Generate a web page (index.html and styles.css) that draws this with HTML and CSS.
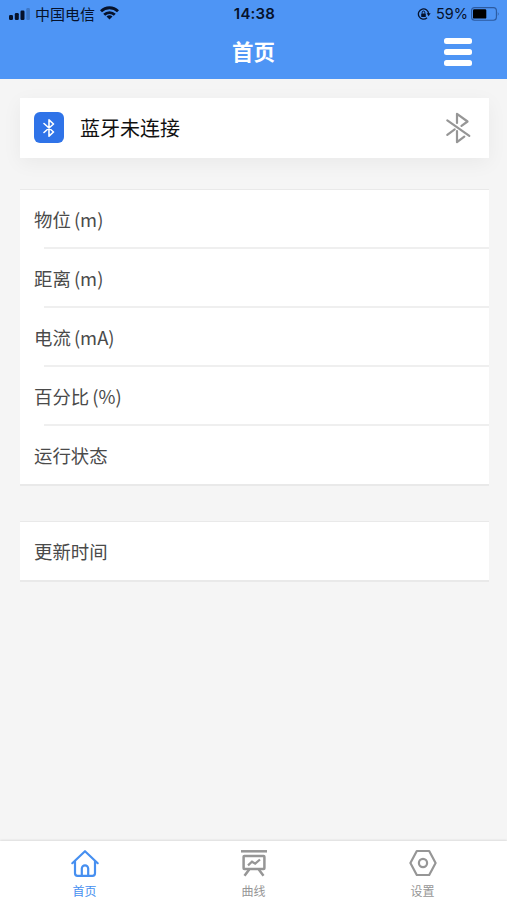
FILE: index.html
```html
<!DOCTYPE html>
<html lang="zh-CN">
<head>
    <meta charset="UTF-8">
    <meta name="viewport" content="width=device-width, initial-scale=1.0">
    <title>首页</title>
    <link rel="stylesheet" href="styles.css">
</head>
<body>
    <header class="header">
        <div class="status-bar">
            <div class="status-left">
                <svg class="signal" width="21" height="12" viewBox="0 0 21 12">
                    <rect x="0" y="7" width="4" height="5" rx="1.2"/>
                    <rect x="5.8" y="5" width="4" height="7" rx="1.2"/>
                    <rect x="11.5" y="2.5" width="4" height="9.5" rx="1.2"/>
                    <rect x="17.3" y="0" width="3.6" height="12" rx="1.2" opacity="0.22"/>
                </svg>
                <span class="carrier">中国电信</span>
                <svg class="wifi" width="19" height="14" viewBox="0 0 19 14">
                    <g fill="none" stroke="#06122b" stroke-width="2.8">
                        <path d="M1 5.2a12.2 12.2 0 0 1 17 0"/>
                        <path d="M4.2 8.7a7.6 7.6 0 0 1 10.6 0"/>
                    </g>
                    <path d="M9.5 13.6l-3-3a4.3 4.3 0 0 1 6 0z" fill="#06122b"/>
                </svg>
            </div>
            <span class="clock">14:38</span>
            <div class="status-right">
                <svg class="rotation-lock" width="14" height="12" viewBox="0 0 14 12">
                    <path d="M11.6 6A5.1 5.1 0 1 0 10 9.7" fill="none" stroke="#06122b" stroke-width="1.3"/>
                    <path d="M9.7 5.3h3.9l-2 2.9z" fill="#06122b"/>
                    <rect x="4.2" y="5.4" width="4.6" height="3.5" rx="0.5" fill="#06122b"/>
                    <path d="M5.2 5.6V4.4a1.3 1.3 0 0 1 2.6 0v1.2" fill="none" stroke="#06122b"/>
                </svg>
                <span class="percent">59%</span>
                <svg class="battery" width="29" height="14" viewBox="0 0 29 14">
                    <rect x="0.6" y="0.6" width="24.8" height="12.6" rx="3" fill="none" stroke="#2c5a9f" stroke-width="1.1"/>
                    <rect x="2" y="2.2" width="13.3" height="9.4" rx="1.2" fill="#000"/>
                    <path d="M26.8 4.8q1.8 2.1 0 4.2z" fill="#2c5a9f"/>
                </svg>
            </div>
        </div>
        <div class="nav-bar">
            <h1 class="title">首页</h1>
            <div class="menu">
                <span></span>
                <span></span>
                <span></span>
            </div>
        </div>
    </header>

    <main class="content">
        <section class="bluetooth">
            <div class="bluetooth-icon">
                <svg width="12" height="20" viewBox="0 0 12 20">
                    <path d="M1 5.5l9.5 8.5L6 18.2V1.8L10.5 6 1 14.5" fill="none" stroke="#fff" stroke-width="1.6" stroke-linejoin="round" stroke-linecap="round"/>
                </svg>
            </div>
            <span class="bluetooth-text">蓝牙未连接</span>
            <svg class="bluetooth-off" width="26" height="32" viewBox="0 0 26 32">
                <g fill="none" stroke="#969696" stroke-width="2.2" stroke-linejoin="round" stroke-linecap="round">
                    <path d="M2.3 8.3l22 15.6"/>
                    <path d="M12 11V1.8l10.5 7.7-6 4.3"/>
                    <path d="M2.3 22.8l7.4-5.4"/>
                    <path d="M12 19V30.2l7.3-5.6"/>
                </g>
            </svg>
        </section>

        <ul class="list">
            <li class="row">物位 (m)</li>
            <li class="row">距离 (m)</li>
            <li class="row">电流 (mA)</li>
            <li class="row">百分比 (%)</li>
            <li class="row">运行状态</li>
        </ul>

        <ul class="list list-time">
            <li class="row">更新时间</li>
        </ul>
    </main>

    <nav class="tab-bar">
        <a class="tab active">
            <svg width="30" height="30" viewBox="0 0 30 30" fill="none" stroke="currentColor" stroke-width="2.2" stroke-linecap="round" stroke-linejoin="round">
                <path d="M2.3 15.2L15 3.2l12.7 12"/>
                <path d="M5 13.2v12.1a2.5 2.5 0 0 0 2.5 2.5h15a2.5 2.5 0 0 0 2.5-2.5V13.2"/>
                <path d="M11.8 27.5v-7a3.2 3.2 0 0 1 6.4 0v7"/>
            </svg>
            <span>首页</span>
        </a>
        <a class="tab">
            <svg width="30" height="30" viewBox="0 0 30 30" fill="none" stroke="currentColor" stroke-width="2.5">
                <path d="M2 3.3h26"/>
                <rect x="4.6" y="8" width="20.8" height="13" rx="0.8"/>
                <path d="M9 17.4l4-3.7 3.2 2 4.8-4.2" stroke-width="2.2"/>
                <path d="M10.2 21.4l-4.7 6.4M19.8 21.4l4.7 6.4"/>
            </svg>
            <span>曲线</span>
        </a>
        <a class="tab">
            <svg width="30" height="30" viewBox="0 0 30 30" fill="none" stroke="currentColor" stroke-width="2.2" stroke-linejoin="round">
                <path d="M8.8 3h12.4L27.6 15l-6.4 12H8.8L2.4 15z"/>
                <circle cx="15" cy="15" r="4.1"/>
            </svg>
            <span>设置</span>
        </a>
    </nav>
</body>
</html>
```
FILE: styles.css
```css
* {
    box-sizing: border-box;
}

body {
    display: flex;
    flex-direction: column;
    height: 900px;
    margin: 0;
    background-color: #f5f5f5;
    color: #4a4a4a;
    font-family: "Noto Sans CJK SC", sans-serif;
    overflow: hidden;
}

/* Header */
.header {
    height: 79px;
    background-color: #4e95f5;
}

.status-bar {
    display: grid;
    grid-template-columns: 1fr auto 1fr;
    align-items: center;
    height: 27px;
    padding: 0 7px 0 9px;
    color: #06122b;
}

.status-left,
.status-right {
    display: flex;
    align-items: center;
}

.status-right {
    justify-content: flex-end;
}

.signal {
    fill: #06122b;
}

.carrier {
    margin: 0 5px 0 5px;
    font-size: 15px;
    line-height: 27px;
}

.wifi {
    margin-bottom: 1px;
}

.clock {
    font-family: Inter, sans-serif;
    font-size: 15px;
    font-weight: 600;
    letter-spacing: 0.2px;
}

.percent {
    margin: 0 3px 0 5px;
    font-family: Inter, sans-serif;
    font-size: 14.5px;
}

.nav-bar {
    display: grid;
    grid-template-columns: 1fr auto 1fr;
    align-items: center;
    height: 50px;
    padding-right: 35px;
    padding-left: 35px;
}

.title {
    grid-column: 2;
    margin: 0;
    padding-bottom: 2px;
    color: #fff;
    font-size: 21.5px;
    font-weight: 700;
    line-height: 46px;
}

.menu {
    display: flex;
    flex-direction: column;
    justify-self: end;
    gap: 5px;
}

.menu span {
    width: 28px;
    height: 6px;
    border-radius: 2.5px;
    background-color: #fff;
}

/* Cards */
.content {
    flex: 1;
    padding: 19px 18px 0 20px;
}

.bluetooth {
    display: flex;
    align-items: center;
    height: 60px;
    padding: 0 18px 0 14px;
    background-color: #fff;
    box-shadow: 0 5px 20px rgba(0, 0, 0, 0.05);
}

.bluetooth-icon {
    display: flex;
    align-items: center;
    justify-content: center;
    width: 30px;
    height: 31px;
    margin-bottom: 1px;
    border-radius: 6px;
    background-color: #2f73e8;
}

.bluetooth-text {
    flex: 1;
    margin-left: 16px;
    padding-bottom: 1px;
    color: #111;
    font-size: 20px;
}

.bluetooth-off {
    margin-bottom: 1px;
}

.list {
    margin: 31px 0 0;
    padding: 0;
    list-style: none;
    background-color: #fff;
    border-top: 1px solid #e9e9e9;
    border-bottom: 2px solid #e9e9e9;
}

.list-time {
    margin-top: 35px;
}

.row {
    display: flex;
    align-items: center;
    height: 59px;
    padding-bottom: 2px;
    padding-left: 14px;
    font-size: 18.4px;
    word-spacing: -1px;
    background: linear-gradient(#efefef, #efefef) 24px 100% / 100% 2px no-repeat;
}

.row:last-child {
    height: 58px;
    padding-bottom: 1px;
    background: none;
}

/* Bottom tabs */
.tab-bar {
    display: flex;
    height: 59px;
    background-color: #fff;
    box-shadow: 0 -1px 2px rgba(0, 0, 0, 0.1);
}

.tab {
    display: flex;
    flex: 1;
    flex-direction: column;
    align-items: center;
    gap: 5px;
    padding-top: 7px;
    color: #969696;
    font-size: 12px;
    line-height: 16px;
}

.tab svg {
    flex-shrink: 0;
}

.tab.active {
    color: #468ff0;
}
```
